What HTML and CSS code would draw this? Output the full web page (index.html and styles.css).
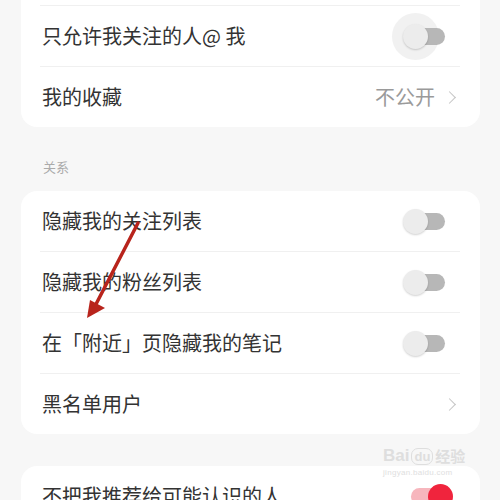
FILE: index.html
```html
<!DOCTYPE html>
<html lang="zh-CN">
<head>
<meta charset="utf-8">
<link rel="stylesheet" href="styles.css">
</head>
<body>
<div class="page">
  <div class="card card-first">
    <div class="row"></div>
    <div class="row">
      <span class="label">只允许我关注的人@ 我</span>
      <span class="toggle"><span class="halo"></span></span>
    </div>
    <div class="row">
      <span class="label">我的收藏</span>
      <span class="value">不公开<span class="chev"></span></span>
    </div>
  </div>

  <div class="section-title">关系</div>

  <div class="card">
    <div class="row">
      <span class="label">隐藏我的关注列表</span>
      <span class="toggle"></span>
    </div>
    <div class="row">
      <span class="label">隐藏我的粉丝列表</span>
      <span class="toggle"></span>
    </div>
    <div class="row">
      <span class="label">在「附近」页隐藏我的笔记</span>
      <span class="toggle"></span>
    </div>
    <div class="row">
      <span class="label">黑名单用户</span>
      <span class="value"><span class="chev"></span></span>
    </div>
  </div>

  <div class="card card-last">
    <div class="row">
      <span class="label">不把我推荐给可能认识的人</span>
      <span class="toggle toggle-on"></span>
    </div>
  </div>
</div>

<svg class="arrow" width="500" height="500" viewBox="0 0 500 500">
  <line x1="138" y1="223" x2="94" y2="308" stroke="#b8241c" stroke-width="3.5" stroke-linecap="round"/>
  <polygon points="87,318 90,300 105,308" fill="#b8241c"/>
</svg>

<div class="watermark">
  <div class="wm-top"><span class="wm-bai">Bai</span><span class="wm-du">du</span><span class="wm-jy">经验</span></div>
  <div class="wm-url">jingyan.baidu.com</div>
</div>
</body>
</html>
```

FILE: styles.css
```css
html, body {
  margin: 0;
  padding: 0;
  background: #f7f7f7;
  width: 500px;
  height: 500px;
  overflow: hidden;
  font-family: "Noto Sans CJK SC", "Noto Sans", sans-serif;
}

.page {
  padding: 0 20px 0 21px;
  display: flex;
  flex-direction: column;
}

.card {
  background: #ffffff;
  border-radius: 16px;
  padding: 0 20px 0 19px;
}

.card-first {
  margin-top: -55px;
}

.card-last {
  margin-top: 32px;
}

.row {
  height: 60px;
  display: flex;
  align-items: center;
  justify-content: space-between;
  border-bottom: 1px solid #f0f0f0;
}

.row:last-child {
  border-bottom: none;
}

.label {
  font-size: 20px;
  color: #333333;
  padding-left: 2px;
  line-height: 1;
}

.value {
  display: flex;
  align-items: center;
  font-size: 20px;
  color: #9a9a9a;
  line-height: 1;
}

.chev {
  display: inline-block;
  width: 8px;
  height: 8px;
  border-top: 1.5px solid #c4c4c4;
  border-right: 1.5px solid #c4c4c4;
  transform: rotate(45deg);
  margin-left: 10px;
  margin-right: 6px;
}

.section-title {
  font-size: 13px;
  color: #ababab;
  line-height: 18px;
  padding-left: 22px;
  margin-top: 31px;
  margin-bottom: 15px;
}

.toggle {
  position: relative;
  z-index: 0;
  width: 42px;
  height: 25px;
  margin-right: 15px;
  flex: none;
}

.toggle::before {
  content: "";
  position: absolute;
  left: 7px;
  right: 0;
  top: 4px;
  height: 17px;
  border-radius: 9px;
  background: #b7b7b7;
}

.toggle::after {
  content: "";
  position: absolute;
  left: 0;
  top: 0;
  width: 25px;
  height: 25px;
  border-radius: 50%;
  background: #ececec;
  box-shadow: 0 1px 2px rgba(0, 0, 0, 0.18);
}

.halo {
  position: absolute;
  z-index: -1;
  left: -11px;
  top: -11px;
  width: 47px;
  height: 47px;
  border-radius: 50%;
  background: #f1f1f1;
}

.toggle-on {
  margin-right: 7px;
}

.toggle-on::before {
  left: 0;
  right: 8px;
  background: #f7b6bd;
}

.toggle-on::after {
  left: auto;
  right: 0;
  background: #f0243d;
  box-shadow: none;
}

.arrow {
  position: absolute;
  left: 0;
  top: 0;
  pointer-events: none;
}

.watermark {
  position: absolute;
  left: 383px;
  top: 446px;
  color: #dcdcdc;
  font-family: "Liberation Sans", sans-serif;
  opacity: 0.9;
}

.wm-top {
  display: flex;
  align-items: center;
  font-size: 17px;
  font-weight: bold;
  line-height: 20px;
}

.wm-du {
  border: 1.5px solid #dcdcdc;
  border-radius: 7px;
  padding: 0 2px;
  margin: 0 2px;
  font-size: 13px;
  line-height: 15px;
}

.wm-jy {
  font-family: "Noto Sans CJK SC", sans-serif;
  font-size: 15px;
}

.wm-url {
  font-size: 8px;
  line-height: 10px;
  margin-top: 2px;
  letter-spacing: 0.3px;
}
```
